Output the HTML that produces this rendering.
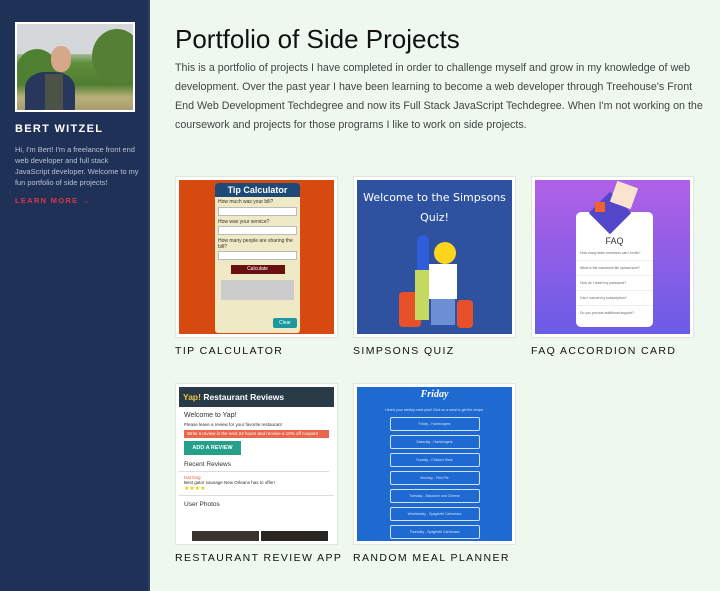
<!DOCTYPE html>
<html><head><meta charset="utf-8"><style>
*{margin:0;padding:0;box-sizing:border-box}
body{width:720px;height:591px;overflow:hidden;background:#eef8ee;font-family:"Liberation Sans",sans-serif;position:relative}
.side{position:absolute;left:0;top:0;width:150px;height:591px;background:#1f3157;border-right:2px solid #2d3f66}
.photo{position:absolute;left:15px;top:22px;width:120px;height:90px;background:#fff;padding:2px}
.photo div{width:100%;height:100%;background:linear-gradient(180deg,#cfd4d6 0%,#c8cfc9 30%,#5f8f3c 45%,#4d7d2e 70%,#b8b07a 85%,#a89d6c 100%);position:relative;overflow:hidden}
.name{position:absolute;left:15px;top:123px;color:#fff;font-weight:bold;font-size:11px;letter-spacing:1.3px}
.bio{position:absolute;left:15px;top:144px;width:125px;color:#b8c2d6;font-size:7.4px;line-height:11px}
.lm{position:absolute;left:15px;top:196px;color:#e0324e;font-size:7.5px;font-weight:bold;letter-spacing:1.3px}
h1{position:absolute;left:175px;top:24px;font-weight:normal;font-size:26px;color:#111}
.intro{position:absolute;left:175px;top:59px;width:545px;font-size:10.7px;line-height:19px;color:#444;white-space:nowrap}
.card{position:absolute;width:163px;height:162px;background:#fff;border:1px solid #dfe6df;padding:3px}
.card .in{width:100%;height:100%;position:relative;overflow:hidden}
.lab{position:absolute;font-size:10.5px;letter-spacing:1.4px;color:#111}
</style></head><body>
<div class="side">
 <div class="photo"><div>
  <div style="position:absolute;left:0;top:0;width:100%;height:30px;background:#d4d8da"></div>
  <div style="position:absolute;left:0;top:25px;width:40px;height:40px;background:#4f7f30;border-radius:50%"></div>
  <div style="position:absolute;left:75px;top:5px;width:50px;height:55px;background:#557f34;border-radius:50%"></div>
  <div style="position:absolute;left:34px;top:22px;width:20px;height:26px;background:#d7a78a;border-radius:45%"></div>
  <div style="position:absolute;left:8px;top:48px;width:50px;height:40px;background:#27385c;border-radius:40% 40% 0 0"></div>
  <div style="position:absolute;left:28px;top:50px;width:18px;height:36px;background:#4c5248"></div>
 </div></div>
 <div class="name">BERT WITZEL</div>
 <div class="bio">Hi, I'm Bert! I'm a freelance front end web developer and full stack JavaScript developer. Welcome to my fun portfolio of side projects!</div>
 <div class="lm">LEARN MORE →</div>
</div>
<h1>Portfolio of Side Projects</h1>
<div class="intro">This is a portfolio of projects I have completed in order to challenge myself and grow in my knowledge of web<br>development. Over the past year I have been learning to become a web developer through Treehouse's Front<br>End Web Development Techdegree and now its Full Stack JavaScript Techdegree. When I'm not working on the<br>coursework and projects for those programs I like to work on side projects.</div>

<div class="card" style="left:175px;top:176px"><div class="in" style="background:#d6490f">
 <div style="position:absolute;left:36px;top:3px;width:85px;height:150px;background:#efe9c5;border-radius:3px;overflow:hidden;font-size:5px;color:#333">
  <div style="background:#1f4a78;color:#fff;font-weight:bold;font-size:9px;text-align:center;height:14px;line-height:14px">Tip Calculator</div>
  <div style="padding:2px 3px">How much was your bill?</div>
  <div style="margin:0 3px;height:9px;background:#fff;border:1px solid #bbb"></div>
  <div style="padding:3px 3px 1px">How was your service?</div>
  <div style="margin:0 3px;height:9px;background:#fff;border:1px solid #bbb"></div>
  <div style="padding:3px 3px 1px">How many people are sharing the bill?</div>
  <div style="margin:0 3px;height:9px;background:#fff;border:1px solid #bbb"></div>
  <div style="margin:5px auto 0;width:54px;height:9px;background:#6a0f0f;color:#fff;text-align:center;line-height:9px">Calculate</div>
  <div style="margin:6px 6px 0;height:20px;background:#ccc"></div>
  <div style="position:absolute;right:3px;bottom:5px;width:24px;height:10px;background:#1a9aa0;color:#fff;text-align:center;line-height:10px;border-radius:2px">Clear</div>
 </div></div></div>
<div class="lab" style="left:175px;top:345px">TIP CALCULATOR</div>

<div class="card" style="left:353px;top:176px"><div class="in" style="background:#2e52a0">
 <div style="color:#fff;font-size:11px;text-align:center;margin-top:8px;line-height:20px;font-family:'DejaVu Sans',sans-serif">Welcome to the Simpsons<br>Quiz!</div>
 <div style="position:absolute;left:60px;top:55px;width:12px;height:40px;background:#2f5fd8;border-radius:6px"></div>
 <div style="position:absolute;left:77px;top:62px;width:22px;height:22px;background:#fed41d;border-radius:50%"></div>
 <div style="position:absolute;left:72px;top:84px;width:28px;height:35px;background:#fff"></div>
 <div style="position:absolute;left:74px;top:119px;width:24px;height:26px;background:#6c8fd6"></div>
 <div style="position:absolute;left:42px;top:112px;width:22px;height:35px;background:#e8502a;border-radius:4px"></div>
 <div style="position:absolute;left:100px;top:120px;width:16px;height:28px;background:#e8502a;border-radius:4px"></div>
 <div style="position:absolute;left:58px;top:90px;width:14px;height:50px;background:#c5d860"></div>
</div></div>
<div class="lab" style="left:353px;top:345px">SIMPSONS QUIZ</div>

<div class="card" style="left:531px;top:176px"><div class="in" style="background:linear-gradient(180deg,#b160e6,#6a5ce6)">
 <div style="position:absolute;left:41px;top:32px;width:77px;height:115px;background:#fff;border-radius:5px;font-size:3.5px;color:#666">
  <div style="text-align:center;font-size:9px;color:#333;margin-top:24px">FAQ</div>
  <div style="padding:5px 4px;border-bottom:1px solid #eee">How many team members can I invite?</div>
  <div style="padding:5px 4px;border-bottom:1px solid #eee">What is the maximum file upload size?</div>
  <div style="padding:5px 4px;border-bottom:1px solid #eee">How do I reset my password?</div>
  <div style="padding:5px 4px;border-bottom:1px solid #eee">Can I cancel my subscription?</div>
  <div style="padding:5px 4px">Do you provide additional support?</div>
 </div>
 <div style="position:absolute;background:#5346c8;transform:rotate(45deg);top:18px;left:60px;width:30px;height:30px"></div>
 <div style="position:absolute;left:78px;top:4px;width:22px;height:22px;background:#fbe4cf;transform:rotate(20deg)"></div>
 <div style="position:absolute;left:60px;top:22px;width:10px;height:10px;background:#f0622d"></div>
</div></div>
<div class="lab" style="left:531px;top:345px">FAQ ACCORDION CARD</div>

<div class="card" style="left:175px;top:383px"><div class="in" style="background:#fff;font-size:4.5px;color:#333">
 <div style="background:#2a3b48;height:20px;color:#fff;font-weight:bold;font-size:8.5px;line-height:20px;padding-left:4px"><span style="color:#f2c54a">Yap!</span> Restaurant Reviews</div>
 <div style="font-size:7px;padding:5px 5px 3px">Welcome to Yap!</div>
 <div style="padding:0 5px">Please leave a review for your favorite restaurant</div>
 <div style="margin:3px 5px;background:#e8674a;color:#fff;height:8px;line-height:8px;padding-left:3px">Write a review in the next 24 hours and receive a 10% off coupon!</div>
 <div style="margin:3px 5px;width:57px;height:14px;background:#25a08a;color:#fff;font-size:5.5px;line-height:14px;text-align:center;font-weight:bold">ADD A REVIEW</div>
 <div style="font-size:6.5px;padding:3px 5px;border-bottom:1px solid #ddd;margin:0 5px 0 0">Recent Reviews</div>
 <div style="padding:3px 5px 0;color:#e05a3a">Dat Dog</div>
 <div style="padding:0 5px">Best gator sausage New Orleans has to offer!</div>
 <div style="padding:0 5px;color:#f2c400;font-size:6px">★★★★</div>
 <div style="font-size:6.5px;padding:5px 5px 2px;border-top:1px solid #ddd;margin-top:3px">User Photos</div>
 <div style="position:absolute;left:13px;top:144px;width:67px;height:20px;background:#3a3430"></div>
 <div style="position:absolute;left:82px;top:144px;width:67px;height:20px;background:#2a2624"></div>
</div></div>
<div class="lab" style="left:175px;top:552px">RESTAURANT REVIEW APP</div>

<div class="card" style="left:353px;top:383px"><div class="in" style="background:#1f6ad0;font-size:3.5px;color:#cfe0ff;text-align:center">
 <div style="font-size:10px;color:#fff;font-style:italic;font-weight:bold;margin-top:2px;font-family:'Liberation Serif',serif">Friday</div>
 <div style="margin:8px 0 5px">Here's your weekly meal plan! Click on a meal to get the recipe.</div>
 <div style="margin:0 auto;width:90px">
  <div style="border:1px solid #cfe0ff;height:14px;line-height:13px;margin-bottom:4px;border-radius:2px">Friday - Hamburgers</div>
  <div style="border:1px solid #cfe0ff;height:14px;line-height:13px;margin-bottom:4px;border-radius:2px">Saturday - Hamburgers</div>
  <div style="border:1px solid #cfe0ff;height:14px;line-height:13px;margin-bottom:4px;border-radius:2px">Sunday - Chicken Stew</div>
  <div style="border:1px solid #cfe0ff;height:14px;line-height:13px;margin-bottom:4px;border-radius:2px">Monday - Fish Pie</div>
  <div style="border:1px solid #cfe0ff;height:14px;line-height:13px;margin-bottom:4px;border-radius:2px">Tuesday - Macaroni and Cheese</div>
  <div style="border:1px solid #cfe0ff;height:14px;line-height:13px;margin-bottom:4px;border-radius:2px">Wednesday - Spaghetti Carbonara</div>
  <div style="border:1px solid #cfe0ff;height:14px;line-height:13px;border-radius:2px">Thursday - Spaghetti Carbonara</div>
 </div>
</div></div>
<div class="lab" style="left:353px;top:552px">RANDOM MEAL PLANNER</div>
</body></html>
